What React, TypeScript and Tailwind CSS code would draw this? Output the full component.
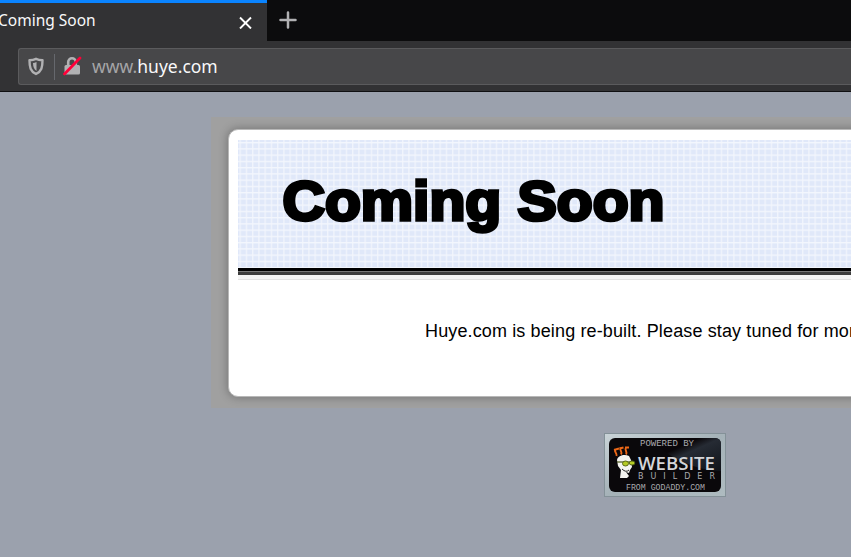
import React from "react";

const gridPattern = (
  <svg className="absolute inset-0 h-full w-full" aria-hidden="true">
    <defs>
      <pattern id="grid" x="1.500" y="2" width="6.25" height="6.25" patternUnits="userSpaceOnUse">
        <rect width="6.25" height="6.25" fill="#e0e8f9" />
        <path d="M0 .7H6.25M.7 0V6.25" stroke="#f3f6fd" strokeWidth="1.2" />
      </pattern>
    </defs>
    <rect width="100%" height="100%" fill="url(#grid)" />
  </svg>
);

function Browser() {
  return (
    <header className="h-[92px] border-b border-[#101012] bg-[#323234]">
      <div className="flex h-[41px] bg-[#0c0c0d]">
        <div className="flex w-[267px] items-center justify-between border-t-[3px] border-[#0a84ff] bg-[#323234] pr-[15px]">
          <span className="-ml-[2px] pb-[4px] font-['Noto_Sans'] text-[15.5px] leading-5 text-[#f9f9fa]">Coming Soon</span>
          <svg width="13" height="13" viewBox="0 0 13 13" stroke="#fff" strokeWidth="1.9"><path d="M1 1.500l11 11M12 1.500L1 12.500" /></svg>
        </div>
        <svg className="mt-[11px] ml-3" width="18" height="18" viewBox="0 0 18 18" stroke="#b1b1b3" strokeWidth="2.500" strokeLinecap="round"><path d="M9 1.500v15M1.500 9h15" /></svg>
      </div>
      <div className="mt-[7px] ml-[18px] flex h-[37px] items-center rounded-l-[3px] border border-r-0 border-[#5b5b5d] bg-[#474749]">
        <svg className="mb-[1px] ml-[9px]" width="17" height="19" viewBox="0 0 17 19">
          <path d="M8 1.800c2 .9 4 1.300 6.500 1.500 0 7-.8 10.900-6.500 13.700C2.300 14.200 1.500 10.300 1.500 3.300 4 3.100 6 2.700 8 1.800z" fill="none" stroke="#b1b1b3" strokeWidth="2.400" strokeLinejoin="round" />
          <path d="M8.500 5v8.900C6 12.500 5.100 9.800 5 6c1.200-.1 2.400-.4 3.500-1z" fill="#b1b1b3" />
        </svg>
        <div className="ml-[9px] h-[26px] w-px bg-[#66686d]" />
        <svg className="mb-[1px] ml-2" width="19" height="20" viewBox="0 0 19 20">
          <path d="M5.200 9.500V6a3.800 3.800 0 0 1 7.600 0v3.500" fill="none" stroke="#b1b1b3" strokeWidth="2.600" />
          <rect x="1.500" y="9" width="15.500" height="9.500" rx="1.500" fill="#b1b1b3" />
          <path d="M1.500 18L17 2" stroke="#ff0039" strokeWidth="2.700" strokeLinecap="round" />
        </svg>
        <div className="mb-[2px] ml-[10px] font-['Noto_Sans'] text-[17.5px] leading-6 text-[#a5a5a7]">www.<span className="text-[#f9f9fa]">huye.com</span></div>
      </div>
    </header>
  );
}

function Badge() {
  return (
    <svg width="122" height="64" viewBox="0 0 122 64" className="mt-[25px] ml-[604px]">
      <defs>
        <linearGradient id="frame" x2="1" y2="1"><stop stopColor="#c9d3d7" /><stop offset=".5" stopColor="#a5b2b8" /><stop offset="1" stopColor="#aebbc0" /></linearGradient>
        <linearGradient id="shine" x2="1" y2="1"><stop offset=".35" stopColor="#090609" /><stop offset=".5" stopColor="#262b34" /><stop offset="1" stopColor="#10141a" /></linearGradient>
      </defs>
      <rect width="122" height="64" fill="#849198" />
      <rect x="1" y="1" width="120" height="62" fill="url(#frame)" />
      <rect x="5" y="5" width="112" height="54" rx="6" fill="#0a080b" />
      <path d="M44 5H111q6 0 6 6v27C91 37 66 26 44 5z" fill="url(#shine)" />
      <g fontFamily="Liberation Mono, monospace" fill="#aaabaf">
        <text x="36" y="13.300" fontSize="9" textLength="54" lengthAdjust="spacingAndGlyphs">POWERED BY</text>
        <text x="34" y="36.500" fontFamily="Open Sans, sans-serif" fontWeight="600" fontSize="18" fill="#d4d5d8" textLength="77" lengthAdjust="spacingAndGlyphs">WEBSITE</text>
        <text x="34" y="45.500" fontFamily="DejaVu Sans, sans-serif" fontSize="8" textLength="77">BUILDER</text>
        <text x="22" y="57" fontSize="9" textLength="79" lengthAdjust="spacingAndGlyphs">FROM GODADDY.COM</text>
      </g>
      <path d="M13 27c1-5 8-6 12-4l2 4 1 7-2 3-1 3-3-1 3 4-2 2h-7l1-8-3-4z" fill="#f4f4f0" />
      <path d="M12.500 23c1-3-3-4-1-7M17 21.500c2-3-2-4-.500-7M22 21.500c2-3-2-4 0-7M10 17l5-1.500M15.500 15.500l4-1M21 14.500l4 0" fill="none" stroke="#ed6817" strokeWidth="1.900" />
      <path d="M13 29h15" stroke="#4a561d" strokeWidth="1.200" />
      <ellipse cx="21.500" cy="30.500" rx="3" ry="2.500" fill="#b4ca23" stroke="#596918" />
      <ellipse cx="28" cy="30" rx="2.800" ry="2" fill="#b4ca23" stroke="#596918" />
      <path d="M18 36q4 4 7 1" fill="none" stroke="#222" />
    </svg>
  );
}

export default function App() {
  return (
    <div className="h-[557px] w-[851px] overflow-hidden bg-[#9ba1ad]">
      <Browser />
      <main className="pt-[25px]">
        <section className="ml-[211px] h-[291px] overflow-hidden bg-[#a0a0a0] pt-[12px] pl-[17px]">
          <div className="h-[268px] w-[700px] rounded-[10px] border border-[#b8b8b8] bg-white pt-[10px] pl-[9px] shadow-[0_0_8px_1px_rgba(0,0,0,0.25)]">
            <div className="relative h-[128px]">
              {gridPattern}
              <svg className="relative block" width="613" height="128" viewBox="0 0 613 128">
                <text x="44.500" y="79.500" fontFamily="Liberation Sans, sans-serif" fontWeight="700" fontSize="56" textLength="382" lengthAdjust="spacingAndGlyphs" fill="#000" stroke="#000" strokeWidth="3.500">Coming Soon</text>
              </svg>
            </div>
            <div className="h-[3px] bg-black" />
            <div className="h-px bg-[#777]" />
            <div className="h-[3px] bg-[#3d3d3d]" />
            <div className="h-[5px] border-b border-[#e3e3e3] bg-[#f5f5f5]" />
            <p className="mt-[39px] ml-[187px] font-['Liberation_Sans'] text-[18px] leading-6 tracking-[0.13px] whitespace-nowrap text-black">Huye.com is being re-built. Please stay tuned for more</p>
          </div>
        </section>
        <Badge />
      </main>
    </div>
  );
}
